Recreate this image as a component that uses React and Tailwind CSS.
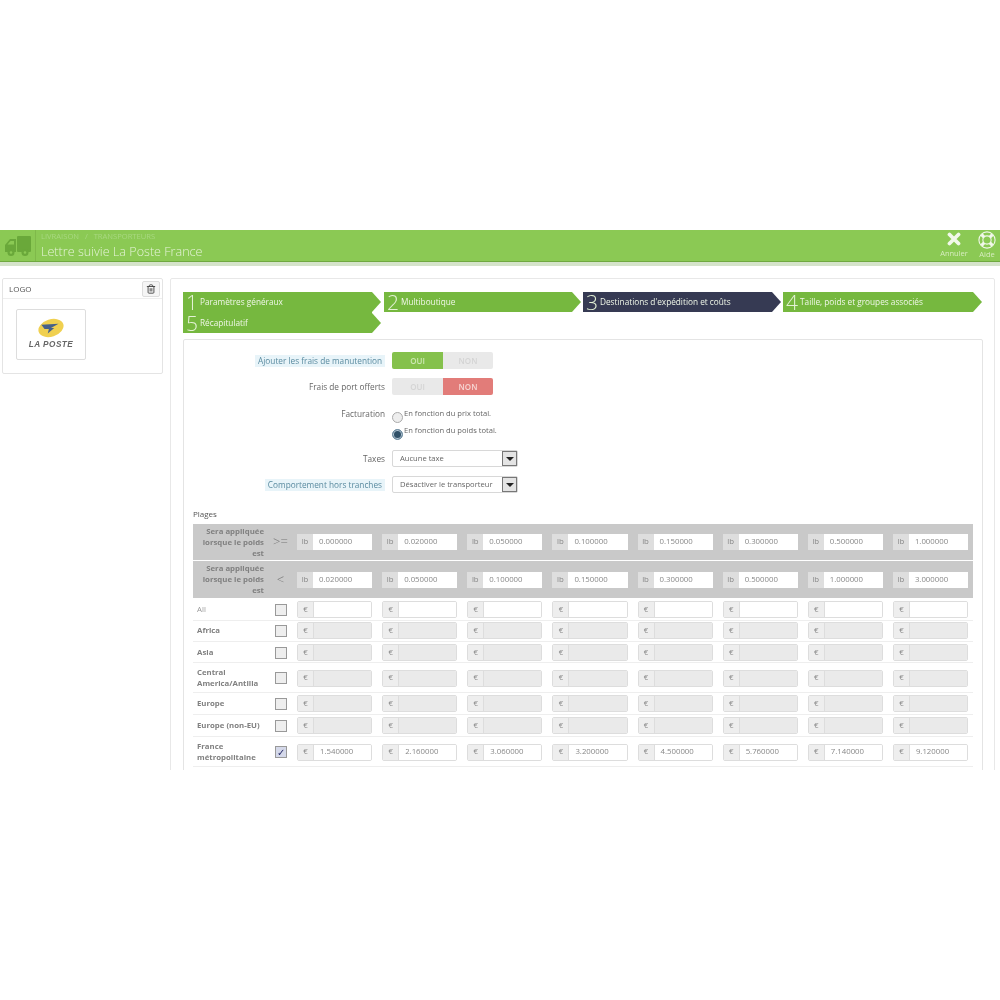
import { Trash2 } from 'lucide-react';

const minRow = ['0.000000', '0.020000', '0.050000', '0.100000', '0.150000', '0.300000', '0.500000', '1.000000'];
const maxRow = ['0.020000', '0.050000', '0.100000', '0.150000', '0.300000', '0.500000', '1.000000', '3.000000'];
const franceRow = ['1.540000', '2.160000', '3.060000', '3.200000', '4.500000', '5.760000', '7.140000', '9.120000'];
const empty = ['', '', '', '', '', '', '', ''];

const zones = [
    { name: 'All', h: 'h-[23px] pt-[1px]', values: empty, enabled: true, plain: true },
    { name: 'Africa', h: 'h-[21px] pb-[1px]', values: empty },
    { name: 'Asia', h: 'h-[21px] pt-[1px]', values: empty },
    { name: 'Central America/Antilla', h: 'h-[30px] pt-[1px]', values: empty },
    { name: 'Europe', h: 'h-[22px]', values: empty },
    { name: 'Europe (non-EU)', h: 'h-[22px]', values: empty },
    { name: 'France métropolitaine', h: 'h-[30px] pt-[1px]', values: franceRow, enabled: true, checked: true },
];

function Step({ n, label, dark, className }) {
    return (
        <div className={`relative flex h-[20px] items-center ${dark ? 'bg-[#363a53]' : 'bg-[#76b83f]'} ${className}`}>
            <span className="ml-[3px] w-[14px] text-[21px] leading-[20px] font-light text-[#e4f2d6]">{n}</span>
            <span className="text-[8.25px] leading-none text-[#f0f7e8]">{label}</span>
            <span className={`absolute top-0 right-[-9px] h-0 w-0 border-y-[10px] border-l-[9px] border-y-transparent ${dark ? 'border-l-[#363a53]' : 'border-l-[#76b83f]'}`}></span>
        </div>
    );
}

function Toggle({ on }) {
    return (
        <div className="flex h-[17px] w-[101px] text-[8px] font-semibold">
            <div className={`flex w-[51px] items-center justify-center rounded-l-[2px] ${on ? 'bg-[#85c14c] text-[#cfe8b5]' : 'bg-[#e9e9e9] text-[#d4d4d4]'}`}>OUI</div>
            <div className={`flex w-[50px] items-center justify-center rounded-r-[2px] ${on ? 'bg-[#e9e9e9] text-[#d4d4d4]' : 'bg-[#e27c79] text-[#f6d5d3]'}`}>NON</div>
        </div>
    );
}

function Select({ value }) {
    return (
        <div className="flex h-[17px] w-[126px] items-center justify-between rounded-[2px] border border-[#d8d8d8] bg-white pl-[7px] text-[7.6px] text-[#666]">
            <span>{value}</span>
            <span className="flex h-[15px] w-[15px] items-center justify-center border border-[#777] bg-[#e4e4e4]">
                <span className="h-0 w-0 border-x-[4px] border-t-[4px] border-x-transparent border-t-[#222]"></span>
            </span>
        </div>
    );
}

function Label({ text, hint }) {
    return (
        <div className="flex w-[142px] justify-end">
            <span className={`text-[8.25px] leading-[12px] ${hint ? 'bg-[#e8f4f9] px-[3px] text-[#5a8ba0]' : 'text-[#666]'}`}>{text}</span>
        </div>
    );
}

function Radio({ checked, text }) {
    return (
        <div className="flex h-[17px] items-start">
            <span className={`mt-[4px] h-[11px] w-[11px] rounded-full border ${checked ? 'border-[#6f8ea3] bg-[#2f5068] ring-1 ring-inset ring-[#b7c9d6]' : 'border-[#aaa] bg-[#eee]'}`}></span>
            <span className="ml-[1px] text-[7.6px] leading-[10px] text-[#666]">{text}</span>
        </div>
    );
}

function PriceInput({ unit, value, dark, disabled }) {
    if (dark) {
        return (
            <div className="flex h-[16px] text-[7.8px] text-[#888]">
                <span className="flex w-[16px] items-center justify-center bg-[#dedede]">{unit}</span>
                <span className="flex flex-1 items-center bg-white pl-[6px]">{value}</span>
            </div>
        );
    }
    return (
        <div className="flex h-[17px] overflow-hidden rounded-[2px] border border-[#ddd] text-[7.8px] text-[#888]">
            <span className="flex w-[15px] items-center justify-center bg-[#eee]">{unit}</span>
            <span className={`flex flex-1 items-center border-l border-[#ddd] pl-[6px] ${disabled ? 'bg-[#eaeaea]' : 'bg-white'}`}>{value}</span>
        </div>
    );
}

function HeaderRow({ sign, values, className }) {
    return (
        <div className={`flex items-center bg-[#c9c9c9] ${className}`}>
            <div className="w-[71px] text-right text-[7.8px] leading-[11px] font-bold text-[#808080]">Sera appliquée lorsque le poids est</div>
            <div className="w-[33px] text-center text-[13px] font-light text-[#777]">{sign}</div>
            <div className="grid flex-1 grid-cols-8 gap-x-[10px] pr-[5px]">
                {values.map((v, i) => <PriceInput key={i} unit="lb" value={v} dark />)}
            </div>
        </div>
    );
}

function ZoneRow({ zone }) {
    return (
        <div className={`flex items-center border-b border-[#eee] ${zone.h}`}>
            <div className={`w-[71px] pl-[4px] text-[7.8px] leading-[11px] ${zone.plain ? 'text-[#999]' : 'font-bold text-[#808080]'}`}>{zone.name}</div>
            <div className="flex w-[33px] justify-center">
                <span className={`flex h-[12px] w-[12px] items-center justify-center border border-[#999] text-[10px] leading-none ${zone.checked ? 'bg-[#d5d9ea] text-[#2a2f6b]' : 'bg-[#eee]'}`}>{zone.checked ? '✓' : ''}</span>
            </div>
            <div className="grid flex-1 grid-cols-8 gap-x-[10px] pr-[5px]">
                {zone.values.map((v, i) => <PriceInput key={i} unit="€" value={v} disabled={!zone.enabled} />)}
            </div>
        </div>
    );
}

export default function App() {
    return (
        <div className="h-[1000px] overflow-hidden bg-white font-['Open_Sans',sans-serif] blur-[0.4px]">
            <div className="h-[230px]"></div>

            {/* Page head */}
            <div className="flex h-[36px] border-b-[4px] border-[#d5e3ca] bg-[#8bc954]">
                <div className="flex h-[32px] w-full border-b border-[#6fa83f]">
                    <div className="flex w-[36px] items-center justify-center border-r border-[#7fb94a]">
                        <svg width="28" height="22" viewBox="0 0 28 22" fill="#6aa83a">
                            <path d="M1 10 L6 4 H12 V17 H1 Z" />
                            <path d="M3.5 9.5 L6.5 6 H10 V9.5 Z" fill="#8bc954" />
                            <rect x="13" y="1" width="14" height="16" rx="1" />
                            <circle cx="7" cy="17.5" r="3.5" />
                            <circle cx="7" cy="17.5" r="1.3" fill="#8bc954" />
                            <circle cx="21" cy="17.5" r="3.5" />
                            <circle cx="21" cy="17.5" r="1.3" fill="#8bc954" />
                        </svg>
                    </div>
                    <div className="ml-[5px] flex-1">
                        <div className="mt-[2px] text-[7.6px] leading-[9px] text-[#a8d880]">LIVRAISON &nbsp;&nbsp;/&nbsp;&nbsp; TRANSPORTEURS</div>
                        <div className="mt-[3px] text-[12.6px] leading-[16px] font-light text-[#e4f3d6]">Lettre suivie La Poste France</div>
                    </div>
                    <div className="flex w-[34px] flex-col items-center">
                        <svg className="mt-[2px]" width="16" height="14" viewBox="0 0 16 14">
                            <path d="M3.5 2.5 L12.5 11.5 M12.5 2.5 L3.5 11.5" stroke="#f2f8ea" strokeWidth="3.8" strokeLinecap="round" />
                        </svg>
                        <span className="mt-[3px] text-[7.5px] leading-[8px] text-[#d6ecbf]">Annuler</span>
                    </div>
                    <div className="ml-[3px] flex w-[26px] flex-col items-center">
                        <svg className="mt-[1px]" width="20" height="18" viewBox="0 0 20 20" fill="none" stroke="#f2f8ea">
                            <circle cx="10" cy="10" r="9" strokeWidth="1.2" />
                            <circle cx="10" cy="10" r="4.6" strokeWidth="1.2" />
                            <path d="M4 4 L7 7 M16 4 L13 7 M4 16 L7 13 M16 16 L13 13" strokeWidth="3.4" />
                        </svg>
                        <span className="mt-[1px] text-[7.5px] leading-[8px] text-[#d6ecbf]">Aide</span>
                    </div>
                </div>
            </div>

            <div className="mt-[12px] flex h-[492px] overflow-hidden pl-[2px]">
                {/* Logo panel */}
                <div className="h-[96px] w-[161px] rounded-[2px] border border-[#e4e4e4] bg-white">
                    <div className="flex h-[20px] items-center justify-between border-b border-[#eee] pl-[6px] pr-[2px] text-[8px] text-[#555]">
                        <span>LOGO</span>
                        <span className="flex h-[16px] w-[18px] items-center justify-center rounded-[2px] border border-[#ddd] bg-[#f5f5f5]">
                            <Trash2 size={10} color="#444" strokeWidth={2.2} />
                        </span>
                    </div>
                    <div className="mt-[10px] ml-[13px] flex h-[51px] w-[70px] flex-col items-center rounded-[2px] border border-[#ddd] pt-[8px]">
                        <svg width="28" height="20" viewBox="0 0 26 18">
                            <ellipse cx="13" cy="9" rx="12" ry="8" fill="#f0d050" transform="rotate(-18 13 9)" />
                            <path d="M4 6 L20 5 L13 9 L16 9 L10 14 L11 10 L7 10 Z" fill="#47618a" />
                        </svg>
                        <span className="mt-[1px] text-[8.2px] leading-[12px] font-semibold tracking-[0.5px] text-[#666] italic font-['Liberation_Sans',sans-serif]">LA POSTE</span>
                    </div>
                </div>

                {/* Main panel */}
                <div className="ml-[7px] h-[600px] w-[825px] rounded-[2px] border border-[#e8e8e8] bg-white pt-[13px] pl-[12px]">
                    <div className="flex flex-wrap items-start">
                        <div className="h-[41px] w-[189px] bg-[#76b83f]">
                            <Step n="1" label="Paramètres généraux" />
                            <Step n="5" label="Récapitulatif" className="mt-[1px]" />
                        </div>
                        <Step n="2" label="Multiboutique" className="ml-[12px] w-[188px]" />
                        <Step n="3" label="Destinations d'expédition et coûts" dark className="ml-[11px] w-[189px]" />
                        <Step n="4" label="Taille, poids et groupes associés" className="ml-[11px] w-[190px]" />
                    </div>

                    {/* Form */}
                    <div className="mt-[6px] h-[500px] w-[800px] rounded-[2px] border border-[#e4e4e4] pt-[12px]">
                        <div className="flex items-center">
                            <div className="ml-[59px]"><Label text="Ajouter les frais de manutention" hint /></div>
                            <div className="ml-[7px]"><Toggle on /></div>
                        </div>
                        <div className="mt-[9px] flex items-center">
                            <div className="ml-[59px]"><Label text="Frais de port offerts" /></div>
                            <div className="ml-[7px]"><Toggle /></div>
                        </div>
                        <div className="mt-[13px] flex">
                            <div className="ml-[59px]"><Label text="Facturation" /></div>
                            <div className="ml-[7px]">
                                <Radio text="En fonction du prix total." />
                                <Radio text="En fonction du poids total." checked />
                            </div>
                        </div>
                        <div className="mt-[8px] flex items-center">
                            <div className="ml-[59px]"><Label text="Taxes" /></div>
                            <div className="ml-[7px]"><Select value="Aucune taxe" /></div>
                        </div>
                        <div className="mt-[9px] flex items-center">
                            <div className="ml-[59px]"><Label text="Comportement hors tranches" hint /></div>
                            <div className="ml-[7px]"><Select value="Désactiver le transporteur" /></div>
                        </div>

                        <div className="mt-[15px] ml-[9px] text-[8px] leading-[12px] text-[#555]">Plages</div>
                        <div className="mt-[4px] ml-[9px] w-[780px]">
                            <HeaderRow sign=">=" values={minRow} className="h-[36px]" />
                            <HeaderRow sign="<" values={maxRow} className="mt-[1px] h-[37px]" />
                            {zones.map((z) => <ZoneRow key={z.name} zone={z} />)}
                        </div>
                    </div>
                </div>
            </div>
        </div>
    );
}
